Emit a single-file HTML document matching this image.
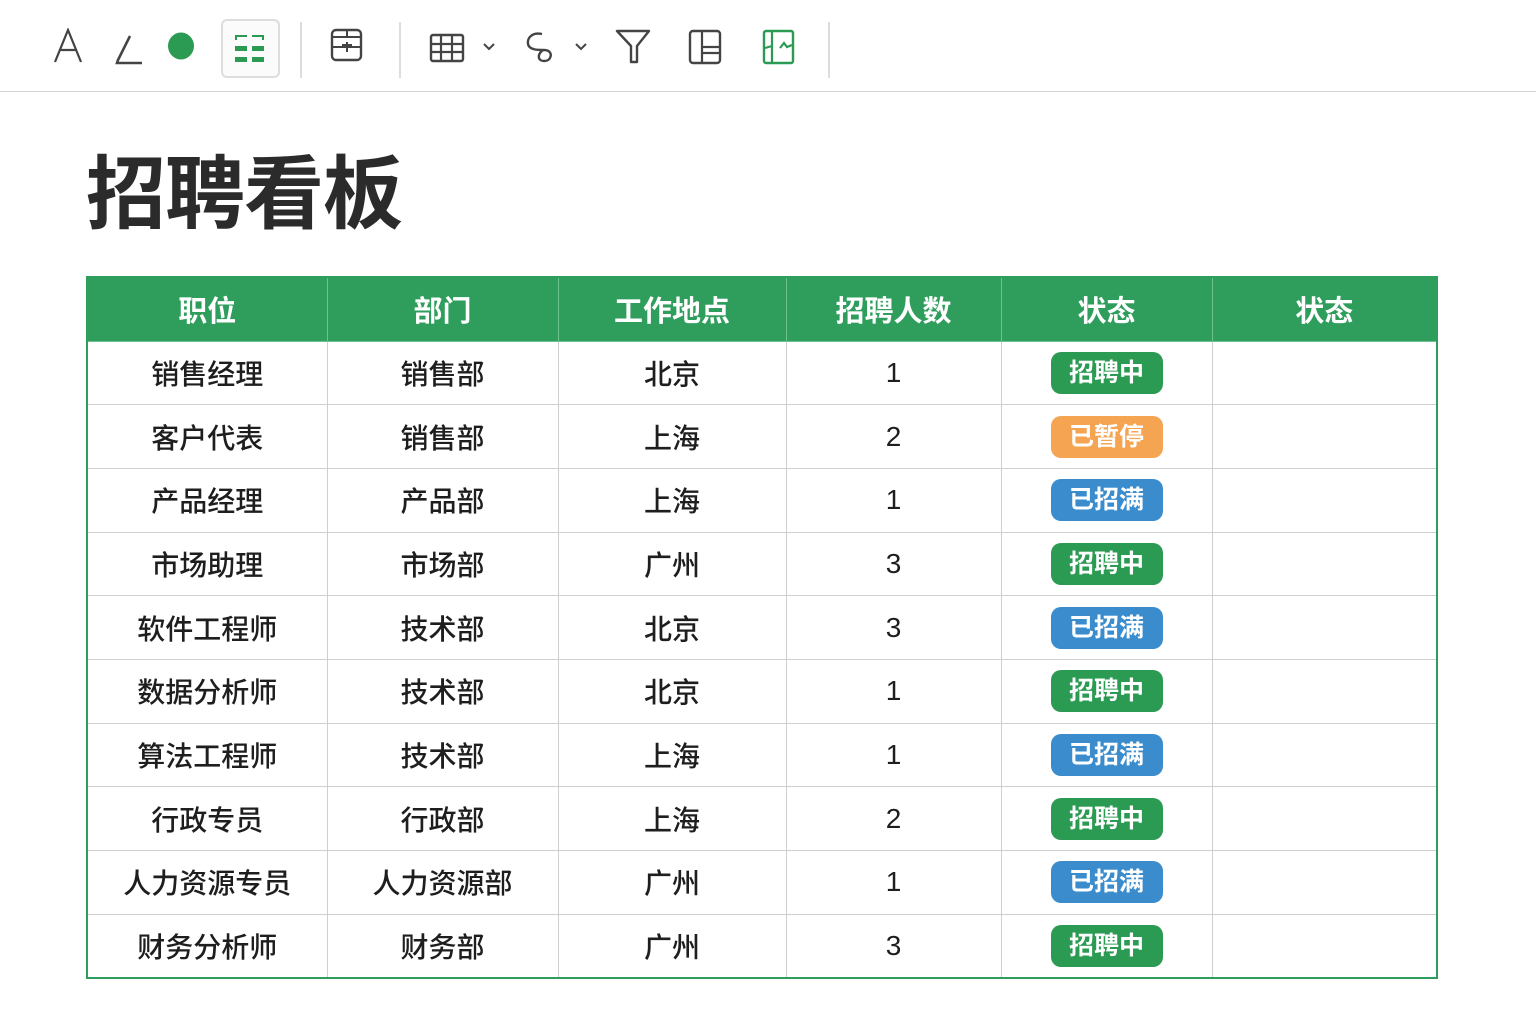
<!DOCTYPE html>
<html><head><meta charset="utf-8">
<style>
*{margin:0;padding:0;box-sizing:border-box}
body{width:1536px;height:1024px;background:#fff;font-family:"Liberation Sans","Noto Sans CJK SC",sans-serif;position:relative;overflow:hidden}
.tb{position:absolute;left:0;top:0;width:1536px;height:92px;border-bottom:1px solid #d4d4d4;background:#fff}
.tb svg{position:absolute}
.sep{position:absolute;top:22px;width:2px;height:56px;background:#ddd}
h1{position:absolute;left:86px;top:138px;font-size:80px;font-weight:700;color:#2b2b2b;letter-spacing:-1px;line-height:100px;font-family:"Noto Sans CJK SC",sans-serif}
table{position:absolute;left:86px;top:276px;border-collapse:collapse;border:2px solid #2f9e5c;table-layout:fixed;width:1350px}
td,th{border:1.5px solid #cfcfcf;text-align:center;font-family:"Liberation Sans","Noto Sans CJK SC",sans-serif;font-size:28px;color:#1e1e1e;height:63.7px;padding:0;font-weight:500}
th{background:#2f9e5c;color:#fff;font-weight:700;height:64px;border-color:#6cc28e;font-size:29px}
.b{display:inline-block;width:112px;height:42px;line-height:42px;border-radius:10px;color:#fff;font-weight:700;font-size:25px;vertical-align:middle}
.g{background:#2b9a52}.o{background:#f5a552}.bl{background:#3a8ccc}
</style></head><body>
<div class="tb">
<svg style="left:52px;top:28px" width="32" height="36" viewBox="0 0 32 36"><path d="M3 34 L16 2 L29 34 M8 22 H24" stroke="#444" stroke-width="2.2" fill="none"/></svg>
<svg style="left:112px;top:32px" width="32" height="34" viewBox="0 0 32 34"><path d="M18 4 L6 28 L5 31 L30 31" stroke="#444" stroke-width="2.6" fill="none"/></svg>
<svg style="left:166px;top:31px" width="30" height="30"><ellipse cx="15" cy="15" rx="13" ry="13.5" fill="#2b9a52"/></svg>
<div style="position:absolute;left:221px;top:19px;width:59px;height:59px;border:2px solid #ddd;border-radius:6px;background:#fbfbfb"></div>
<svg style="left:232px;top:34px" width="36" height="30" viewBox="0 0 36 30"><g fill="#2b9a52"><rect x="3" y="1" width="12" height="2"/><rect x="3" y="1" width="2" height="5"/><rect x="20" y="1" width="12" height="2"/><rect x="30" y="1" width="2" height="5"/><rect x="3" y="12" width="12" height="5"/><rect x="20" y="12" width="12" height="5"/><rect x="3" y="23" width="12" height="5"/><rect x="20" y="23" width="12" height="5"/></g></svg>
<div class="sep" style="left:300px"></div>
<svg style="left:330px;top:28px" width="34" height="34" viewBox="0 0 34 34"><rect x="2" y="2" width="29" height="30" rx="4" stroke="#444" stroke-width="2.4" fill="none"/><path d="M2 9 H31 M2 19 H31 M17 3 V8 M17 14 V24 M12 17 H22" stroke="#444" stroke-width="2" fill="none"/></svg>
<div class="sep" style="left:399px"></div>
<svg style="left:429px;top:33px" width="36" height="30" viewBox="0 0 36 30"><rect x="2" y="2" width="32" height="26" rx="2" stroke="#444" stroke-width="2.4" fill="none"/><path d="M2 11 H34 M2 19 H34 M12 2 V28 M23 2 V28" stroke="#444" stroke-width="2.2"/></svg>
<svg style="left:482px;top:42px" width="14" height="10"><path d="M2 2 L7 7 L12 2" stroke="#444" stroke-width="2" fill="none"/></svg>
<svg style="left:524px;top:30px" width="34" height="36" viewBox="0 0 34 36"><path d="M18 4 C8 2 3 8 4 14 C5 20 14 20 20 20 C26 20 28 24 26 28 C24 32 16 32 15 28 C14 24 18 20 20 20" stroke="#444" stroke-width="2.4" fill="none"/></svg>
<svg style="left:574px;top:42px" width="14" height="10"><path d="M2 2 L7 7 L12 2" stroke="#444" stroke-width="2" fill="none"/></svg>
<svg style="left:614px;top:28px" width="38" height="38" viewBox="0 0 38 38"><path d="M3 3 H35 L23 18 V34 H17 V18 Z" stroke="#444" stroke-width="2.4" fill="none" stroke-linejoin="round"/></svg>
<svg style="left:688px;top:29px" width="34" height="36" viewBox="0 0 34 36"><rect x="2" y="2" width="30" height="32" rx="3" stroke="#444" stroke-width="2.4" fill="none"/><path d="M14 2 V34 M14 18 H32 M14 24 H32" stroke="#444" stroke-width="2.2"/></svg>
<svg style="left:762px;top:29px" width="34" height="36" viewBox="0 0 34 36"><rect x="2" y="2" width="29" height="32" rx="2" stroke="#2b9a52" stroke-width="2.4" fill="none"/><path d="M10 2 V34 M3 19 L10 17 M18 19 L22 14 L25 18 L30 16" stroke="#2b9a52" stroke-width="2.2" fill="none"/></svg>
<div class="sep" style="left:828px"></div>
</div>
<h1>招聘看板</h1>
<table>
<colgroup><col style="width:240px"><col style="width:231px"><col style="width:228px"><col style="width:215px"><col style="width:211px"><col style="width:225px"></colgroup>
<tr><th>职位</th><th>部门</th><th>工作地点</th><th>招聘人数</th><th>状态</th><th>状态</th></tr>
<tr><td>销售经理</td><td>销售部</td><td>北京</td><td>1</td><td><span class="b g">招聘中</span></td><td></td></tr>
<tr><td>客户代表</td><td>销售部</td><td>上海</td><td>2</td><td><span class="b o">已暂停</span></td><td></td></tr>
<tr><td>产品经理</td><td>产品部</td><td>上海</td><td>1</td><td><span class="b bl">已招满</span></td><td></td></tr>
<tr><td>市场助理</td><td>市场部</td><td>广州</td><td>3</td><td><span class="b g">招聘中</span></td><td></td></tr>
<tr><td>软件工程师</td><td>技术部</td><td>北京</td><td>3</td><td><span class="b bl">已招满</span></td><td></td></tr>
<tr><td>数据分析师</td><td>技术部</td><td>北京</td><td>1</td><td><span class="b g">招聘中</span></td><td></td></tr>
<tr><td>算法工程师</td><td>技术部</td><td>上海</td><td>1</td><td><span class="b bl">已招满</span></td><td></td></tr>
<tr><td>行政专员</td><td>行政部</td><td>上海</td><td>2</td><td><span class="b g">招聘中</span></td><td></td></tr>
<tr><td>人力资源专员</td><td>人力资源部</td><td>广州</td><td>1</td><td><span class="b bl">已招满</span></td><td></td></tr>
<tr><td>财务分析师</td><td>财务部</td><td>广州</td><td>3</td><td><span class="b g">招聘中</span></td><td></td></tr>
</table>
</body></html>
